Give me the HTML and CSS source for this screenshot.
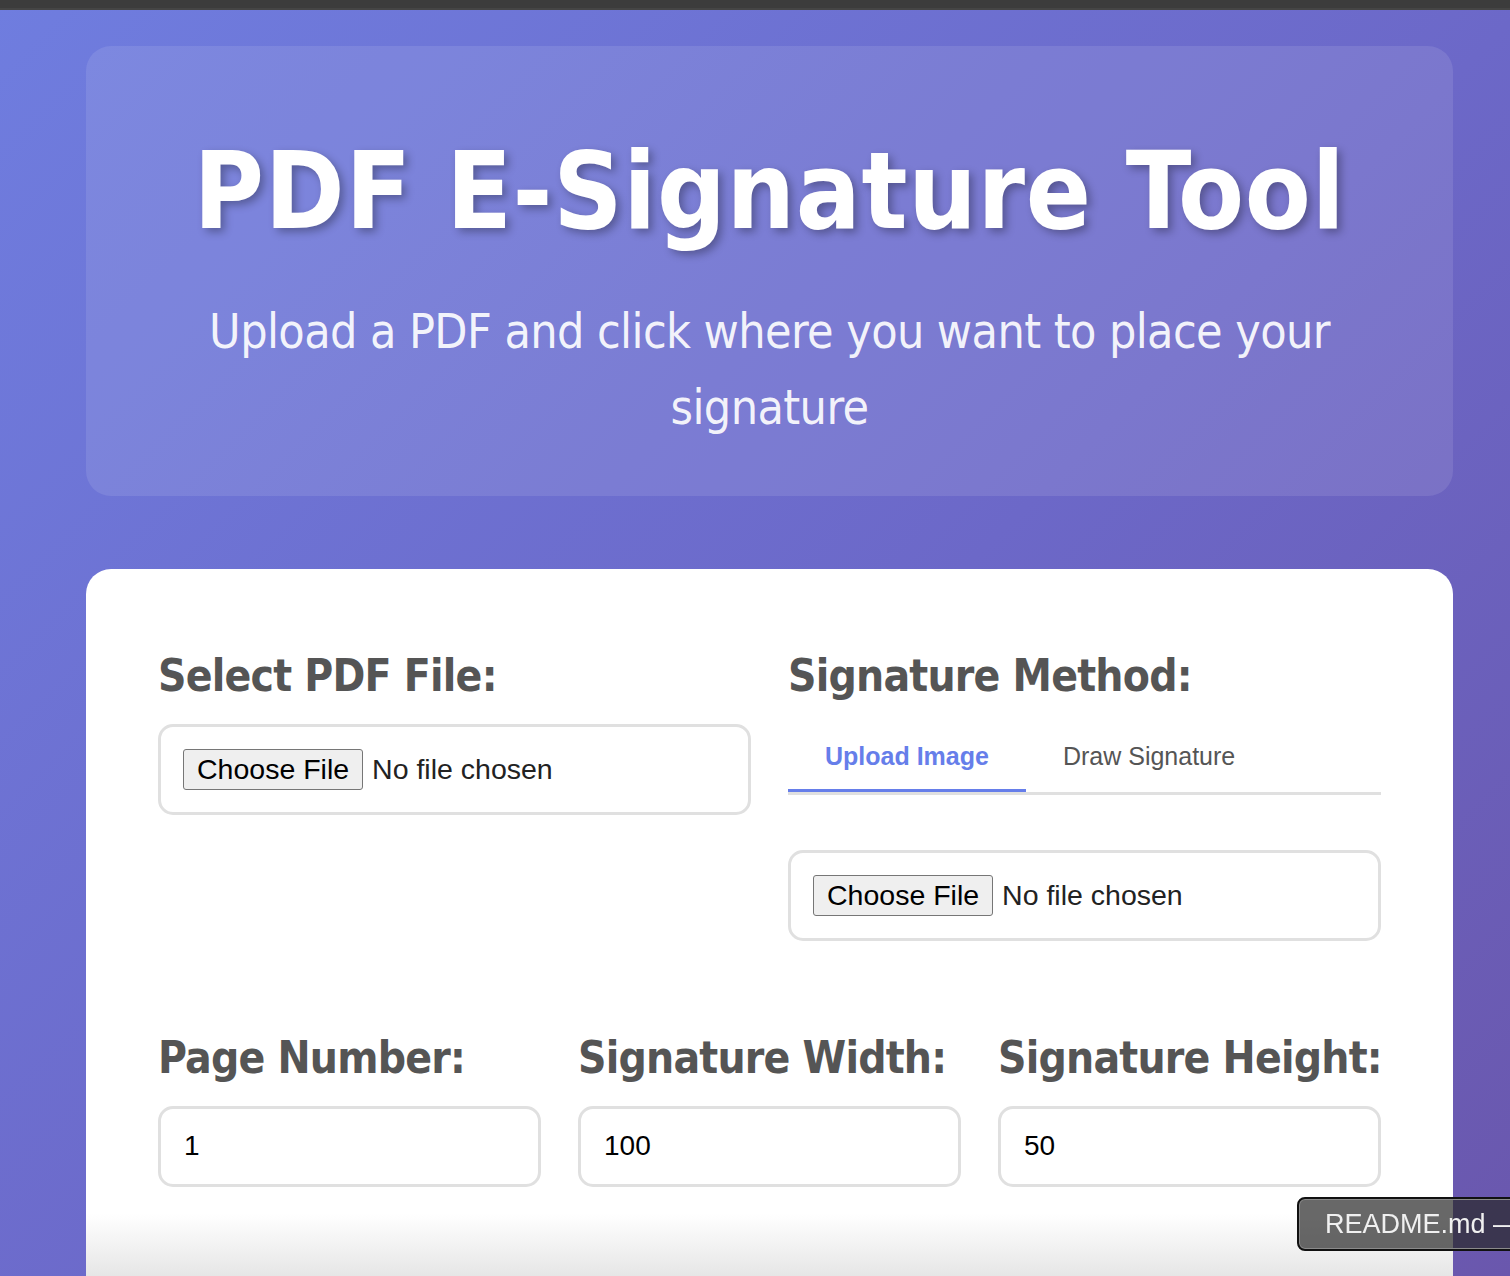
FILE: index.html
```html
<!DOCTYPE html>
<html lang="en">
<head>
<meta charset="utf-8">
<title>PDF E-Signature Tool</title>
<link rel="stylesheet" href="styles.css">
</head>
<body>
<div class="topbar"></div>
<div class="page">
  <header class="hero">
    <h1 class="hero-title">PDF E-Signature Tool</h1>
    <p class="hero-sub">Upload a PDF and click where you want to place your signature</p>
  </header>

  <main class="card">
    <div class="grid-two">
      <section class="field">
        <label class="field-label" for="pdfFile">Select PDF File:</label>
        <div class="file-box">
          <input class="file-input" type="file" id="pdfFile" accept=".pdf">
        </div>
      </section>
      <section class="field">
        <div class="field-label">Signature Method:</div>
        <div class="tabs">
          <button class="tab tab-active" type="button">Upload Image</button>
          <button class="tab" type="button">Draw Signature</button>
        </div>
        <div class="file-box file-box-sig">
          <input class="file-input" type="file" id="sigFile" accept="image/*">
        </div>
      </section>
    </div>

    <div class="grid-three">
      <section class="field">
        <label class="field-label" for="page">Page Number:</label>
        <input class="num-input" id="page" type="text" value="1">
      </section>
      <section class="field">
        <label class="field-label" for="w">Signature Width:</label>
        <input class="num-input" id="w" type="text" value="100">
      </section>
      <section class="field">
        <label class="field-label" for="h">Signature Height:</label>
        <input class="num-input" id="h" type="text" value="50">
      </section>
    </div>
  </main>
</div>
<div class="tooltip">README.md —</div>
</body>
</html>
```

FILE: styles.css
```css
* { box-sizing: border-box; }

html, body {
  margin: 0;
  padding: 0;
  height: 1276px;
  overflow: hidden;
}

body {
  font-family: "DejaVu Sans", Verdana, sans-serif;
  background: linear-gradient(135deg, #6f7ddf 0%, #6c68c8 55%, #6a57ad 100%);
}

.topbar {
  height: 10px;
  background: #3c3c3c;
  border-bottom: 2px solid #454545;
}

.page {
  padding: 36px 57px 0 86px;
}

.hero {
  height: 450px;
  background: rgba(255, 255, 255, 0.1);
  border-radius: 25px;
  padding: 81px 40px 0;
  text-align: center;
  color: #fff;
}

.hero-title {
  margin: 0 0 38px;
  font-size: 107px;
  line-height: 1.2;
  letter-spacing: 0.7px;
  font-weight: bold;
  font-stretch: condensed;
  text-shadow: 4px 4px 8px rgba(0, 0, 0, 0.3);
}

.hero-sub {
  margin: 0 auto;
  font-size: 48px;
  line-height: 76px;
  letter-spacing: -0.6px;
  font-stretch: condensed;
  color: rgba(255, 255, 255, 0.92);
}

.card {
  margin-top: 73px;
  height: 707px;
  padding: 81px 72px 0;
  border-radius: 25px 25px 0 0;
  background: linear-gradient(to bottom, #fff 0, #fff 645px, #e6e6e6 707px);
}

.grid-two {
  display: grid;
  grid-template-columns: 593px 593px;
  column-gap: 37px;
  margin-bottom: 91px;
}

.grid-three {
  display: grid;
  grid-template-columns: repeat(3, 383px);
  column-gap: 37px;
}

.field {
  display: flex;
  flex-direction: column;
  align-items: stretch;
}

.field-label {
  display: block;
  margin-bottom: 21px;
  font-size: 44px;
  line-height: 1.2;
  letter-spacing: -0.8px;
  font-weight: bold;
  font-stretch: condensed;
  color: #555;
  white-space: nowrap;
}

.file-box {
  height: 91px;
  border: 3px solid #e0e0e0;
  border-radius: 15px;
  padding: 0 22px;
  display: flex;
  align-items: center;
}

.file-box-sig {
  margin-top: 55px;
}

.file-input {
  font-family: "Liberation Sans", Arial, sans-serif;
  font-size: 28.5px;
  color: #222;
}

.file-input::file-selector-button {
  font-family: "Liberation Sans", Arial, sans-serif;
  font-size: 28.5px;
  height: 41px;
  padding: 0 13px;
  margin-right: 9px;
  background: #efefef;
  color: #000;
  border: 1px solid #767676;
  border-radius: 3px;
}

.tabs {
  display: flex;
  border-bottom: 3px solid #e0e0e0;
}

.tab {
  font-family: "Liberation Sans", Arial, sans-serif;
  font-size: 25px;
  line-height: 28px;
  padding: 18px 37px 19px;
  background: none;
  border: none;
  border-bottom: 3px solid transparent;
  color: #555;
}

.tab-active {
  font-weight: bold;
  color: #667eea;
  border-bottom-color: #667eea;
}

.num-input {
  height: 81px;
  width: 100%;
  padding: 0 23px;
  border: 3px solid #e0e0e0;
  border-radius: 15px;
  font-family: "Liberation Sans", Arial, sans-serif;
  font-size: 28px;
  color: #000;
  background: #fff;
}

.tooltip {
  position: fixed;
  left: 1297px;
  top: 1197px;
  width: 260px;
  height: 54px;
  padding: 0 26px;
  display: flex;
  align-items: center;
  border: 2px solid #111;
  box-shadow: inset 0 0 0 1px #8a8a8a;
  border-radius: 8px;
  background: rgba(40, 40, 40, 0.7);
  color: #f0f0f0;
  font-family: "Liberation Sans", Arial, sans-serif;
  font-size: 27px;
  white-space: nowrap;
}
```
